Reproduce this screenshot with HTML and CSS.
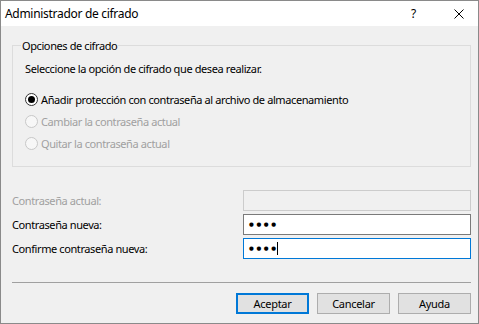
FILE: index.html
```html
<!DOCTYPE html>
<html lang="es">
<head>
<meta charset="UTF-8">
<title>Administrador de cifrado</title>
<link rel="stylesheet" href="styles.css">
</head>
<body>
<div class="window">
    <div class="title-bar">
        <span class="title-text">Administrador de cifrado</span>
        <span class="title-help">?</span>
        <span class="title-close">
            <svg width="10" height="10" viewBox="0 0 10 10"><path d="M0.5 0.5 L9.5 9.5 M9.5 0.5 L0.5 9.5" stroke="#000" stroke-width="1" fill="none"/></svg>
        </span>
    </div>

    <div class="dialog-body">
        <fieldset class="group">
            <legend class="group-title">Opciones de cifrado</legend>
            <div class="group-text">Seleccione la opción de cifrado que desea realizar.</div>
            <div class="radio-list">
                <div class="radio-row">
                    <span class="radio checked"></span>
                    <span>Añadir protección con contraseña al archivo de almacenamiento</span>
                </div>
                <div class="radio-row disabled">
                    <span class="radio"></span>
                    <span>Cambiar la contraseña actual</span>
                </div>
                <div class="radio-row disabled">
                    <span class="radio"></span>
                    <span>Quitar la contraseña actual</span>
                </div>
            </div>
        </fieldset>

        <div class="form-rows">
            <div class="form-row disabled">
                <span class="form-label">Contraseña actual:</span>
                <div class="field field-disabled"></div>
            </div>
            <div class="form-row">
                <span class="form-label">Contraseña nueva:</span>
                <div class="field"><span class="dots">●●●●</span></div>
            </div>
            <div class="form-row">
                <span class="form-label">Confirme contraseña nueva:</span>
                <div class="field field-focus"><span class="dots">●●●●</span><span class="caret"></span></div>
            </div>
        </div>

        <div class="separator"></div>

        <div class="button-row">
            <button class="btn btn-default">Aceptar</button>
            <button class="btn">Cancelar</button>
            <button class="btn">Ayuda</button>
        </div>
    </div>
</div>
</body>
</html>
```

FILE: styles.css
```css
html, body {
    margin: 0;
    padding: 0;
    background-color: #f0f0f0;
}

.window {
    width: 479px;
    height: 324px;
    box-sizing: border-box;
    border: 1px solid #8a8a8a;
    background-color: #f0f0f0;
    font-family: "Noto Sans", "Open Sans", sans-serif;
    font-size: 11px;
    letter-spacing: -0.4px;
    color: #000;
    display: flex;
    flex-direction: column;
}

.title-bar {
    height: 25px;
    background-color: #fff;
    display: flex;
    align-items: center;
    font-size: 12px;
    letter-spacing: -0.3px;
}

.title-text {
    padding-left: 4px;
    flex: 1;
}

.title-help {
    width: 14px;
    margin-right: 29px;
}

.title-close {
    display: flex;
    width: 10px;
    margin-right: 14px;
}

.dialog-body {
    padding: 0 7px 0 11px;
    display: flex;
    flex-direction: column;
}

.group {
    margin: 12px 0 0 0;
    padding: 5px 0 12px 12px;
    border: 1px solid #dcdcdc;
}

.group-title {
    padding: 0 1px;
    margin-left: -4px;
    line-height: 15px;
}

.group-text {
    line-height: 22px;
}

.radio-list {
    margin-top: 8px;
}

.radio-row {
    display: flex;
    align-items: center;
    height: 22px;
    gap: 3px;
}

.radio-row.disabled {
    color: #a0a0a0;
}

.radio {
    width: 11px;
    height: 11px;
    border: 1px solid #333;
    border-radius: 50%;
    background-color: #fff;
    display: flex;
    align-items: center;
    justify-content: center;
}

.radio.checked::after {
    content: "";
    width: 7px;
    height: 7px;
    border-radius: 50%;
    background-color: #000;
}

.radio-row.disabled .radio {
    border-color: #c8c8c8;
    background-color: #f7f7f7;
}

.form-rows {
    margin-top: 23px;
    display: flex;
    flex-direction: column;
    gap: 3px;
}

.form-row {
    display: flex;
    align-items: center;
    height: 21px;
}

.form-row.disabled .form-label {
    color: #a0a0a0;
}

.form-label {
    width: 231px;
}

.field {
    width: 228px;
    height: 21px;
    box-sizing: border-box;
    border: 1px solid #7a7a7a;
    background-color: #fff;
    display: flex;
    align-items: center;
    padding-left: 5px;
}

.field-disabled {
    border-color: #cccccc;
    background-color: #f0f0f0;
}

.field-focus {
    border-color: #0078d7;
}

.dots {
    font-family: "DejaVu Sans", sans-serif;
    font-size: 5.5px;
    letter-spacing: 2.6px;
    line-height: 1;
}

.caret {
    width: 1px;
    height: 13px;
    background-color: #000;
    margin-left: -2px;
}

.separator {
    margin-top: 23px;
    height: 1px;
    background-color: #a0a0a0;
}

.button-row {
    margin-top: 10px;
    display: flex;
    justify-content: flex-end;
    gap: 8px;
}

.btn {
    width: 73px;
    height: 21px;
    box-sizing: border-box;
    border: 1px solid #adadad;
    background-color: #e1e1e1;
    font-family: "Noto Sans", "Open Sans", sans-serif;
    font-size: 11px;
    letter-spacing: -0.3px;
    color: #000;
    padding: 0;
}

.btn-default {
    border: 2px solid #0078d7;
}
```
